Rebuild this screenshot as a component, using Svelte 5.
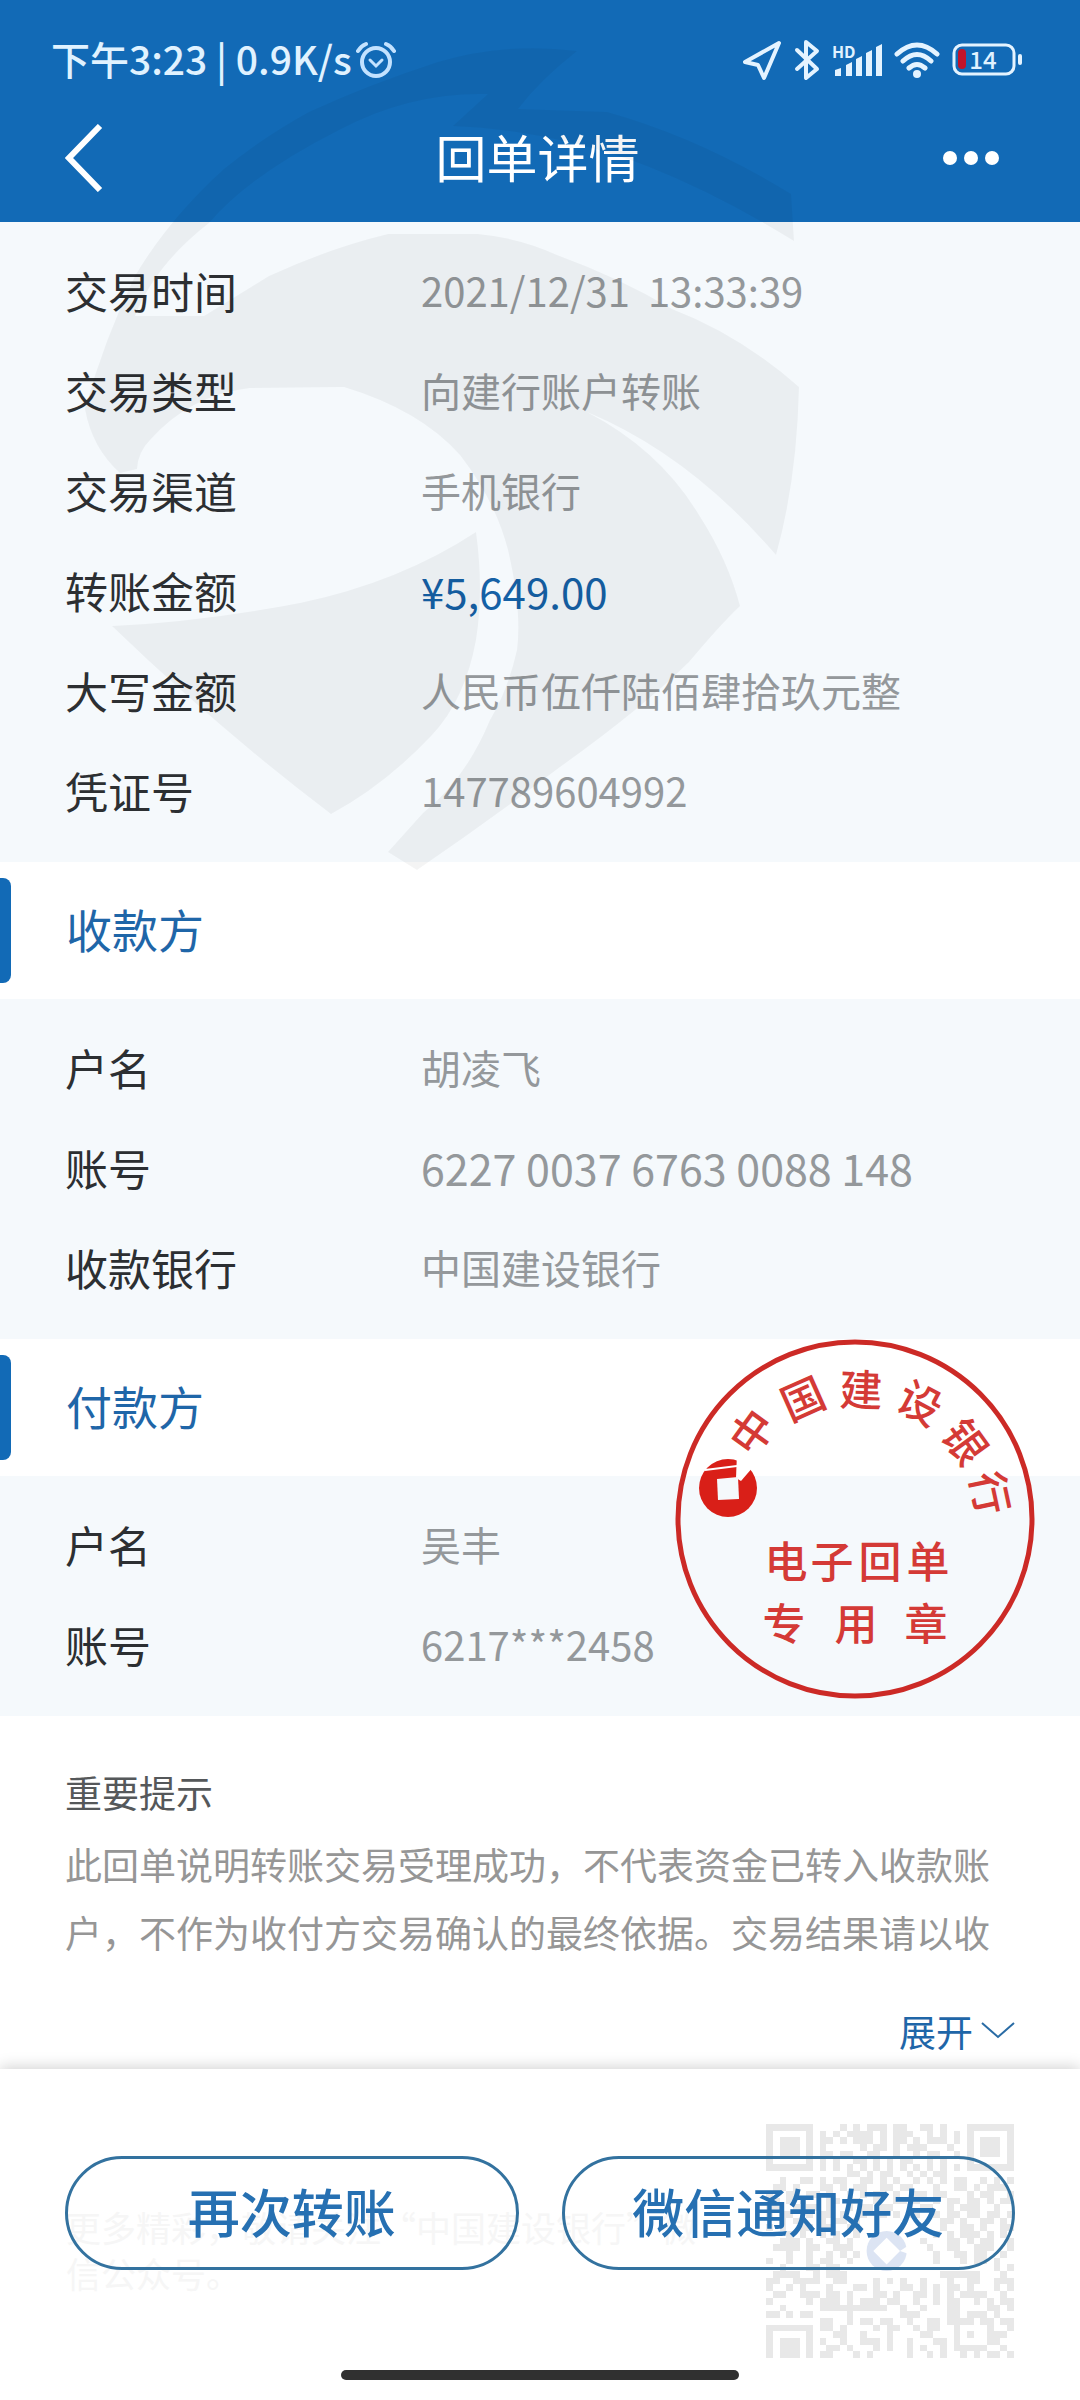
<script lang="ts">
  type Row = { label: string; value: string; kind?: 'amount' | 'account' };

  const details: Row[] = [
    { label: '交易时间', value: '2021/12/31  13:33:39' },
    { label: '交易类型', value: '向建行账户转账' },
    { label: '交易渠道', value: '手机银行' },
    { label: '转账金额', value: '¥5,649.00', kind: 'amount' },
    { label: '大写金额', value: '人民币伍仟陆佰肆拾玖元整' },
    { label: '凭证号', value: '147789604992' },
  ];

  const payee: Row[] = [
    { label: '户名', value: '胡凌飞' },
    { label: '账号', value: '6227 0037 6763 0088 148', kind: 'account' },
    { label: '收款银行', value: '中国建设银行' },
  ];

  const payer: Row[] = [
    { label: '户名', value: '吴丰' },
    { label: '账号', value: '6217***2458' },
  ];

  // Characters along the upper arc of the seal
  const sealArc = [
    { char: '中', x: 77, y: 93, angle: -54 },
    { char: '国', x: 128, y: 60, angle: -24 },
    { char: '建', x: 186, y: 51, angle: 2 },
    { char: '设', x: 245, y: 64, angle: 28 },
    { char: '银', x: 290, y: 103, angle: 54 },
    { char: '行', x: 315, y: 154, angle: 78 },
  ];

  const sealLines = [
    { char: '电', x: 111, y: 223 },
    { char: '子', x: 157, y: 223 },
    { char: '回', x: 205, y: 223 },
    { char: '单', x: 253, y: 223 },
    { char: '专', x: 109, y: 285 },
    { char: '用', x: 181, y: 285 },
    { char: '章', x: 251, y: 285 },
  ];

  // QR modules, '#' is dark; the last rows run off behind the screen edge
  const qrRows = [
    '#######....#.#.###.##..##.#...#######',
    '#.....#.#.#.####.#.###..#.#.#.#.....#',
    '#.###.#.##.#.###.#.##.#.###.#.#.###.#',
    '#.###.#.#.....#.##.#.###...#..#.###.#',
    '#.###.#.##.##..##..#..#.##..#.#.###.#',
    '#.....#.#.#..##.#.#.##..#.#...#.....#',
    '#######.#.#.#.#.#.#.#.#.#.#.#.#######',
    '............##.#.##..#.#.##..........',
    '..#..##.#.##..##.#.#..#.#.#.##..#.#.#',
    '.##.#...##.#.##..##.##...#..##.#.###.',
    '#..##.##.#..#.#.##.#..##.##...#.##..#',
    '.#.#.#...##.##..#..##.#..#.##.##.#.##',
    '##..#.##.#..#.##.##..#.##..#.###..#..',
    '#.##..#.##.#..#..#.#.##..#.##.##.##.#',
    '..#.##..#.##.#............##.#..##.#.',
    '#.#..##.##..##............#..##.#..##',
    '...#.#..#.#..#...........#.#.###.#.#.',
    '..###.#..##.#..........#...##.#.##..#',
    '.####.##..###...........#..##..###..#',
    '...#..#..#.#.#...........#..##.##..#.',
    '#..#..#.##..#............#...#.##.#..',
    '..#...##.##.......................#.#',
    '.####..#.###..............######...#.',
    '##..####..##....#.#.#..#...#..##..###',
    '#..#.#...#...##.#...##.#.#.##.#...#.#',
    '.##..###.##.#...##.#..##.#.#.####..#.',
    '#.....#.###.#.###.##..#..#.##..#.#.##',
    '..#.....##########..#..#...##....##.#',
    '##.#.##.....#.......###....##.###.#..',
    '........##..#.##.##..#..##.####.##.##',
    '#######.##.#....#.##..#.##..#....#..#',
    '#.....#...##..#...#....##...#.#..###.',
    '#.###.#.#..#..###.#..#...##.#....##..',
    '#.###.#..##.#...#.#..#.#..#.#####..#.',
    '#.###.#.##...#.#.....#..#.#..#.#.##.#',
  ];

  const qrPath = qrRows
    .flatMap((row, y) => [...row].map((cell, x) => (cell === '#' ? `M${x} ${y}h1v1h-1z` : '')))
    .join('');
</script>

{#snippet rows(items: Row[])}
  <dl class="panel">
    {#each items as item}
      <div class="row">
        <dt>{item.label}</dt>
        <dd class={item.kind}>{item.value}</dd>
      </div>
    {/each}
  </dl>
{/snippet}

<div class="screen">
  <header>
    <div class="status">
      <div class="status-left">
        <span>下午3:23 | 0.9K/s</span>
        <svg width="40" height="40" viewBox="0 0 40 40" fill="none" stroke="#c3e2ff" stroke-linecap="round">
          <circle cx="20" cy="22" r="14" stroke-width="4" />
          <path d="M2 11Q5 6 10 4M30 4Q35 6 38 11" stroke-width="4" />
          <path d="M14 20l6 6 6-6" stroke-width="3" />
        </svg>
      </div>
      <div class="status-right">
        <svg width="40" height="42" viewBox="0 0 40 42" fill="none" stroke="#e4f3ff" stroke-width="4" stroke-linejoin="round">
          <path d="M37 4L3 23l13 3 6 13z" />
        </svg>
        <svg width="26" height="42" viewBox="0 0 26 42" fill="none" stroke="#e4f3ff" stroke-width="4" stroke-linejoin="round" stroke-linecap="round">
          <path d="M3 11l20 19-11 9V3l11 9L3 30" />
        </svg>
        <div class="signal">
          <span>HD</span>
          <svg width="50" height="36" viewBox="0 0 50 36" fill="#e4f3ff">
            <path d="M3 28l6-2v8H3zM14 23l6-3v14h-6zM24 17l6-3v20h-6zM34 11l6-3v26h-6zM44 5l6-3v32h-6z" />
          </svg>
        </div>
        <svg width="46" height="38" viewBox="0 0 46 38" fill="none" stroke="#e4f3ff" stroke-width="5" stroke-linecap="round">
          <path d="M3 13Q23-5 43 13M9 20Q23 7 37 20M15 27Q23 20 31 27" />
          <circle cx="23" cy="33" r="4" fill="#e4f3ff" stroke="none" />
        </svg>
        <div class="battery">
          <svg width="70" height="34" viewBox="0 0 70 34">
            <rect x="2" y="2" width="60" height="29" rx="8" fill="none" stroke="#e4f3ff" stroke-width="3" />
            <rect x="66" y="11" width="4" height="11" rx="2" fill="#e4f3ff" />
            <rect x="6" y="6" width="8" height="20" rx="4" fill="#c2142b" />
          </svg>
          <span>14</span>
        </div>
      </div>
    </div>
    <div class="nav">
      <button class="icon-btn" aria-label="返回">
        <svg width="38" height="68" viewBox="0 0 38 68" fill="none" stroke="#fff" stroke-width="6">
          <path d="M35 2L4 34l31 32" />
        </svg>
      </button>
      <h1>回单详情</h1>
      <button class="icon-btn more" aria-label="更多">
        <svg width="56" height="14" viewBox="0 0 56 14" fill="#fff">
          <circle cx="7" cy="7" r="7" />
          <circle cx="28" cy="7" r="7" />
          <circle cx="49" cy="7" r="7" />
        </svg>
      </button>
    </div>
  </header>

  <main>
    {@render rows(details)}

    <section>
      <h2>收款方</h2>
      {@render rows(payee)}
    </section>

    <section class="payer">
      <h2>付款方</h2>
      {@render rows(payer)}
      <svg class="seal" width="360" height="360" viewBox="0 0 360 360" role="img" aria-label="电子回单专用章">
        <circle cx="180" cy="180" r="177" fill="none" stroke="#cc2a26" stroke-width="5" />
        {#each sealArc as item}
          <text x={item.x} y={item.y + 16} transform="rotate({item.angle} {item.x} {item.y})">{item.char}</text>
        {/each}
        {#each sealLines as item}
          <text x={item.x} y={item.y + 16}>{item.char}</text>
        {/each}
        <circle cx="53" cy="149" r="29" fill="#d91f18" />
        <path d="M62 114h28L66 142l-5-3z" fill="#fff" />
        <path d="M30 131l32-4" stroke="#fff" stroke-width="2" />
        <path d="M42 140l21-2 1 22-21 1z" fill="#f5f9fc" />
      </svg>
    </section>

    <section class="notice">
      <h3>重要提示</h3>
      <p>此回单说明转账交易受理成功，不代表资金已转入收款账户，不作为收付方交易确认的最终依据。交易结果请以收</p>
      <button class="expand">
        展开
        <svg width="34" height="20" viewBox="0 0 34 20" fill="none" stroke="#2a6ca5" stroke-width="2">
          <path d="M1 2l16 14L33 2" />
        </svg>
      </button>
    </section>
  </main>

  <footer>
    <div class="promo">
      <p>更多精彩，敬请关注“中国建设银行”微信公众号。</p>
      <svg width="248" height="234" viewBox="0 0 37 35" shape-rendering="crispEdges">
        <path d={qrPath} fill="#e8e8e8" />
        <g shape-rendering="auto">
          <circle cx="18" cy="19" r="3" fill="#dce4f3" />
          <path d="M18 17l2 2-2 2-2-2z" fill="#fff" />
          <path d="M20 19l3-2v3z" fill="#fff" />
        </g>
      </svg>
    </div>
    <div class="actions">
      <button>再次转账</button>
      <button>微信通知好友</button>
    </div>
    <div class="home-bar"></div>
  </footer>

  <!-- Translucent watermark lying over the header and the first panel -->
  <svg class="watermark" width="1080" height="880" viewBox="0 0 1080 880" aria-hidden="true">
    <path
      d="M577 51Q505 42 438 62Q370 84 309 112Q262 138 224 169Q168 220 135 276Q104 340 85 409Q92 448 120 473L137 469Q138 452 150 440Q190 395 250 388L344 387Q420 410 460 455Q495 500 508 550Q522 610 517 650Q508 690 490 720Q465 780 423 813L388 852L417 870Q490 820 560 767Q640 710 689 662Q720 625 740 606Q728 560 699 515Q660 450 587 412Q690 455 776 555Q797 480 799 387Q740 335 672 309Q620 278 557 255Q520 238 478 234L388 234Q330 248 269 276L204 316L135 316Q155 265 209 223Q250 175 339 130Q410 92 488 94L453 126Q550 130 647 166Q720 195 794 241L791 194Q700 138 607 112L518 109Q540 80 577 51Z"
    />
    <path d="M112 626Q200 622 300 603Q400 582 476 532Q484 590 476 640Q465 700 432 735Q385 785 331 814Q220 730 112 626Z" />
  </svg>
</div>

<style>
  :global(body) {
    margin: 0;
    background: #fff;
  }

  .screen {
    position: relative;
    min-height: 100vh;
    display: flex;
    flex-direction: column;
    overflow: hidden;
    font-family: 'Noto Sans CJK SC', 'Noto Sans', sans-serif;
    color: #2c2f32;
  }

  h1,
  h2,
  h3,
  p,
  dl,
  dd {
    margin: 0;
  }

  button {
    font-family: inherit;
    padding: 0;
    border: none;
    background: transparent;
    cursor: pointer;
  }

  header {
    background: #126ab6;
    color: #fff;
    padding: 0 58px 0 51px;
  }

  .status {
    display: flex;
    justify-content: space-between;
    align-items: center;
    height: 96px;
    padding-top: 24px;
    box-sizing: border-box;
    margin-bottom: 12px;
    font-size: 39px;
    font-weight: 500;
    line-height: 40px;
    color: #e0f2ff;
  }

  .status-left,
  .status-right {
    display: flex;
    align-items: center;
  }

  .status-left {
    gap: 4px;
  }

  .status-left span {
    padding-bottom: 4px;
  }

  .status-right {
    gap: 12px;
  }

  .signal,
  .battery {
    position: relative;
    display: flex;
  }

  .signal span {
    position: absolute;
    top: -3px;
    left: 0;
    font-size: 16px;
    font-weight: 700;
    line-height: 24px;
  }

  .battery span {
    position: absolute;
    inset: 0 8px 2px 0;
    font-size: 24px;
    line-height: 32px;
    text-align: center;
  }

  .nav {
    display: flex;
    justify-content: space-between;
    align-items: center;
    height: 100px;
    padding: 0 23px 14px 14px;
  }

  .icon-btn {
    display: flex;
    width: 56px;
  }

  h1 {
    padding: 0 0 4px 11px;
    font-size: 51px;
    font-weight: 400;
    line-height: 76px;
  }

  h2 {
    position: relative;
    padding: 0 66px 4px;
    font-size: 46px;
    font-weight: 400;
    line-height: 133px;
    color: #1f66a8;
  }

  h2::before {
    content: '';
    position: absolute;
    left: 0;
    top: 16px;
    bottom: 16px;
    width: 11px;
    border-radius: 0 8px 8px 0;
    background: #126ab6;
  }

  .panel {
    padding: 18px 65px 22px;
    background: #f5f9fc;
  }

  .row {
    display: flex;
    align-items: center;
    height: 100px;
  }

  dt {
    width: 356px;
    font-size: 43px;
  }

  dd {
    font-size: 40px;
    white-space: pre;
    color: #94989b;
  }

  .amount {
    font-size: 42px;
    color: #1561a6;
  }

  .account {
    font-size: 43px;
  }

  .payer {
    position: relative;
  }

  .seal {
    position: absolute;
    top: 0;
    right: 45px;
    fill: #d43a36;
    font-size: 43px;
    font-weight: 500;
    text-anchor: middle;
  }

  .notice {
    padding: 48px 65px 0;
  }

  .notice h3 {
    font-size: 37px;
    font-weight: 400;
    line-height: 56px;
    color: #55585a;
  }

  .notice p {
    margin-top: 10px;
    font-size: 37px;
    line-height: 68px;
    color: #969696;
  }

  .expand {
    display: flex;
    align-items: center;
    gap: 8px;
    margin: 37px 0 0 auto;
    font-size: 37px;
    line-height: 56px;
    color: #1f66a8;
  }

  footer {
    position: relative;
    flex: 1;
    display: flex;
    flex-direction: column;
    justify-content: space-between;
    align-items: center;
    margin-top: 10px;
    padding: 87px 65px 20px;
    background: #fff;
    box-shadow: 0 -2px 14px rgba(0, 0, 0, 0.18);
  }

  .promo {
    position: absolute;
    inset: 55px 66px auto;
    display: flex;
    justify-content: space-between;
  }

  .promo p {
    width: 640px;
    margin-top: 80px;
    font-size: 35px;
    line-height: 46px;
    color: #f6f6f6;
  }

  .actions {
    position: relative;
    display: flex;
    gap: 43px;
    width: 100%;
  }

  .actions button {
    flex: 1;
    height: 114px;
    padding-bottom: 6px;
    border: 3px solid #33729f;
    border-radius: 57px;
    font-size: 52px;
    font-weight: 500;
    color: #2670b2;
  }

  .home-bar {
    position: relative;
    width: 398px;
    height: 10px;
    border-radius: 5px;
    background: #303030;
  }

  .watermark {
    position: absolute;
    top: 0;
    left: 0;
    fill: rgba(0, 0, 0, 0.045);
    pointer-events: none;
  }
</style>
